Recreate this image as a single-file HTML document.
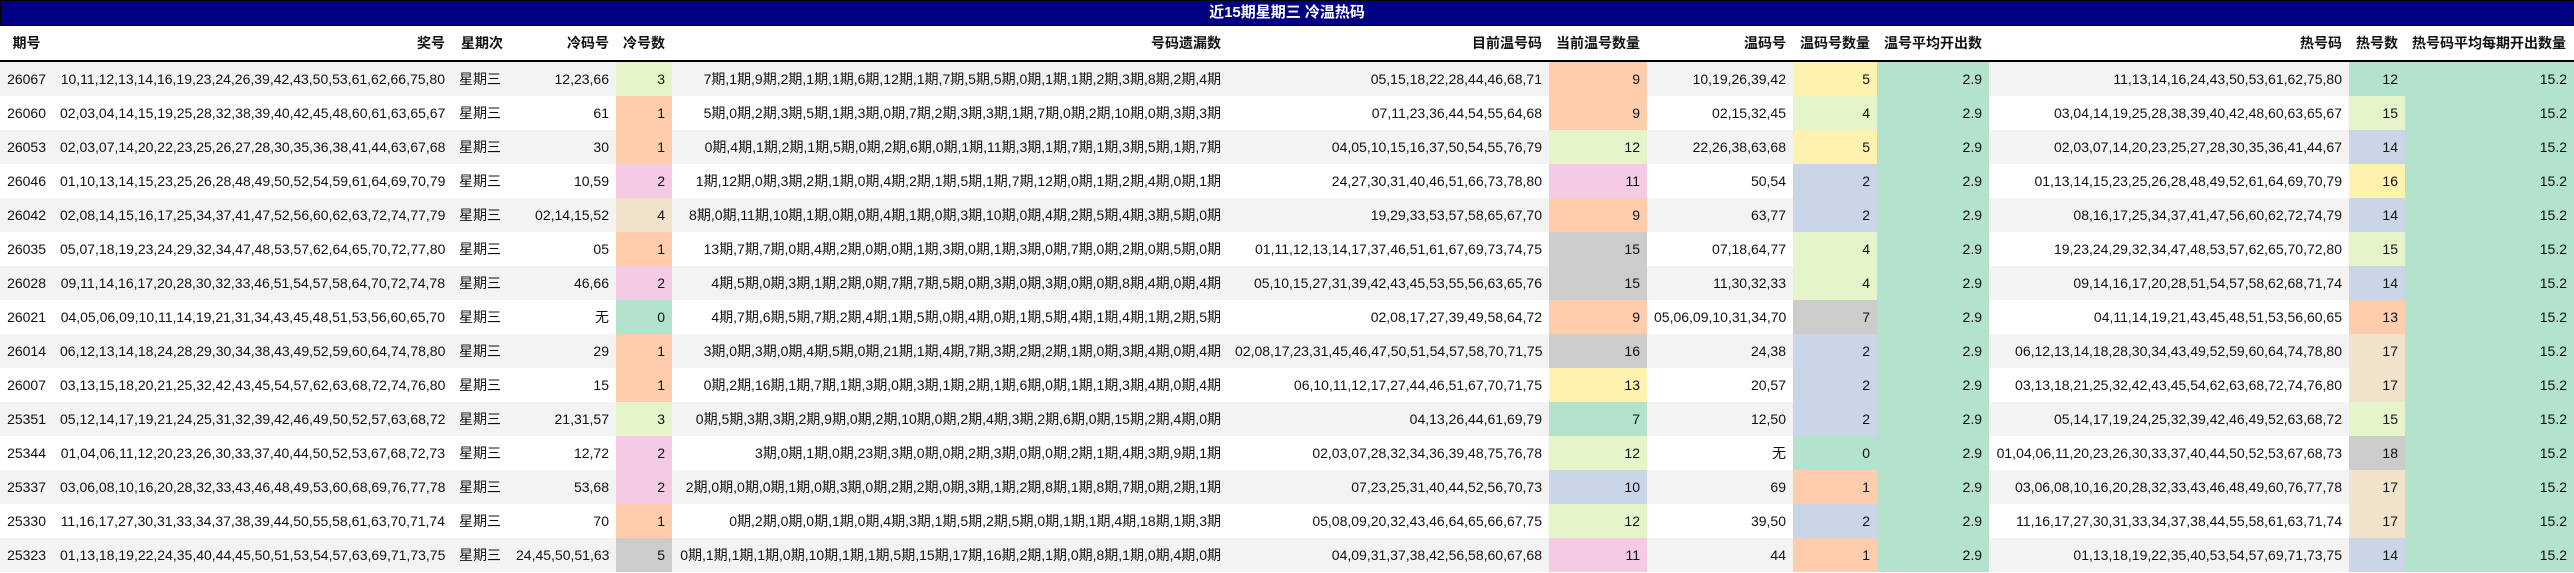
<!DOCTYPE html>
<html><head><meta charset="utf-8"><style>
body{margin:0;width:2574px;height:573px;overflow:hidden;background:#fff;font-family:"Liberation Sans","Noto Sans CJK SC",sans-serif;font-size:14px;color:#111}
.t{height:24px;background:#000080;border:1px solid #000;color:#fff;font-weight:bold;font-size:15px;text-align:center;line-height:24px}
table{border-collapse:collapse;table-layout:fixed;width:2574px}
td,th{padding:0 7px;white-space:nowrap;overflow:hidden;text-align:right}
th{height:34px;border-bottom:2px solid #000;font-weight:bold}
td{height:34px}
tr.o td{background:#f3f3f3}
.l{text-align:left}.c{text-align:center}
tr td.G{background:#e6f5c9}tr td.P{background:#fdcdac}tr td.K{background:#f4cae4}tr td.M{background:#b3e2cd}
tr td.Y{background:#fff2ae}tr td.B{background:#cbd5e8}tr td.E{background:#f1e2cc}tr td.S{background:#cccccc}
</style></head><body>
<div class="t">近15期星期三 冷温热码</div>
<table>
<colgroup><col style="width:53px"><col style="width:399px"><col style="width:57px"><col style="width:107px"><col style="width:56px"><col style="width:556px"><col style="width:321px"><col style="width:98px"><col style="width:146px"><col style="width:84px"><col style="width:112px"><col style="width:360px"><col style="width:56px"><col style="width:169px"></colgroup>
<tr><th class="c">期号</th><th>奖号</th><th class="l" style="padding-left:9px">星期次</th><th>冷码号</th><th class="l">冷号数</th><th>号码遗漏数</th><th>目前温号码</th><th class="l">当前温号数量</th><th>温码号</th><th class="l">温码号数量</th><th class="l">温号平均开出数</th><th>热号码</th><th class="l">热号数</th><th class="l">热号码平均每期开出数量</th></tr>
<tr class="o"><td>26067</td><td>10,11,12,13,14,16,19,23,24,26,39,42,43,50,53,61,62,66,75,80</td><td class="l">星期三</td><td>12,23,66</td><td class="G">3</td><td>7期,1期,9期,2期,1期,1期,6期,12期,1期,7期,5期,5期,0期,1期,1期,2期,3期,8期,2期,4期</td><td>05,15,18,22,28,44,46,68,71</td><td class="P">9</td><td>10,19,26,39,42</td><td class="Y">5</td><td class="M">2.9</td><td>11,13,14,16,24,43,50,53,61,62,75,80</td><td class="M">12</td><td class="M">15.2</td></tr>
<tr><td>26060</td><td>02,03,04,14,15,19,25,28,32,38,39,40,42,45,48,60,61,63,65,67</td><td class="l">星期三</td><td>61</td><td class="P">1</td><td>5期,0期,2期,3期,5期,1期,3期,0期,7期,2期,3期,3期,1期,7期,0期,2期,10期,0期,3期,3期</td><td>07,11,23,36,44,54,55,64,68</td><td class="P">9</td><td>02,15,32,45</td><td class="G">4</td><td class="M">2.9</td><td>03,04,14,19,25,28,38,39,40,42,48,60,63,65,67</td><td class="G">15</td><td class="M">15.2</td></tr>
<tr class="o"><td>26053</td><td>02,03,07,14,20,22,23,25,26,27,28,30,35,36,38,41,44,63,67,68</td><td class="l">星期三</td><td>30</td><td class="P">1</td><td>0期,4期,1期,2期,1期,5期,0期,2期,6期,0期,1期,11期,3期,1期,7期,1期,3期,5期,1期,7期</td><td>04,05,10,15,16,37,50,54,55,76,79</td><td class="G">12</td><td>22,26,38,63,68</td><td class="Y">5</td><td class="M">2.9</td><td>02,03,07,14,20,23,25,27,28,30,35,36,41,44,67</td><td class="B">14</td><td class="M">15.2</td></tr>
<tr><td>26046</td><td>01,10,13,14,15,23,25,26,28,48,49,50,52,54,59,61,64,69,70,79</td><td class="l">星期三</td><td>10,59</td><td class="K">2</td><td>1期,12期,0期,3期,2期,1期,0期,4期,2期,1期,5期,1期,7期,12期,0期,1期,2期,4期,0期,1期</td><td>24,27,30,31,40,46,51,66,73,78,80</td><td class="K">11</td><td>50,54</td><td class="B">2</td><td class="M">2.9</td><td>01,13,14,15,23,25,26,28,48,49,52,61,64,69,70,79</td><td class="Y">16</td><td class="M">15.2</td></tr>
<tr class="o"><td>26042</td><td>02,08,14,15,16,17,25,34,37,41,47,52,56,60,62,63,72,74,77,79</td><td class="l">星期三</td><td>02,14,15,52</td><td class="E">4</td><td>8期,0期,11期,10期,1期,0期,0期,4期,1期,0期,3期,10期,0期,4期,2期,5期,4期,3期,5期,0期</td><td>19,29,33,53,57,58,65,67,70</td><td class="P">9</td><td>63,77</td><td class="B">2</td><td class="M">2.9</td><td>08,16,17,25,34,37,41,47,56,60,62,72,74,79</td><td class="B">14</td><td class="M">15.2</td></tr>
<tr><td>26035</td><td>05,07,18,19,23,24,29,32,34,47,48,53,57,62,64,65,70,72,77,80</td><td class="l">星期三</td><td>05</td><td class="P">1</td><td>13期,7期,7期,0期,4期,2期,0期,0期,1期,3期,0期,1期,3期,0期,7期,0期,2期,0期,5期,0期</td><td>01,11,12,13,14,17,37,46,51,61,67,69,73,74,75</td><td class="S">15</td><td>07,18,64,77</td><td class="G">4</td><td class="M">2.9</td><td>19,23,24,29,32,34,47,48,53,57,62,65,70,72,80</td><td class="G">15</td><td class="M">15.2</td></tr>
<tr class="o"><td>26028</td><td>09,11,14,16,17,20,28,30,32,33,46,51,54,57,58,64,70,72,74,78</td><td class="l">星期三</td><td>46,66</td><td class="K">2</td><td>4期,5期,0期,3期,1期,2期,0期,7期,7期,5期,0期,3期,0期,3期,0期,0期,8期,4期,0期,4期</td><td>05,10,15,27,31,39,42,43,45,53,55,56,63,65,76</td><td class="S">15</td><td>11,30,32,33</td><td class="G">4</td><td class="M">2.9</td><td>09,14,16,17,20,28,51,54,57,58,62,68,71,74</td><td class="B">14</td><td class="M">15.2</td></tr>
<tr><td>26021</td><td>04,05,06,09,10,11,14,19,21,31,34,43,45,48,51,53,56,60,65,70</td><td class="l">星期三</td><td>无</td><td class="M">0</td><td>4期,7期,6期,5期,7期,2期,4期,1期,5期,0期,4期,0期,1期,5期,4期,1期,4期,1期,2期,5期</td><td>02,08,17,27,39,49,58,64,72</td><td class="P">9</td><td>05,06,09,10,31,34,70</td><td class="S">7</td><td class="M">2.9</td><td>04,11,14,19,21,43,45,48,51,53,56,60,65</td><td class="P">13</td><td class="M">15.2</td></tr>
<tr class="o"><td>26014</td><td>06,12,13,14,18,24,28,29,30,34,38,43,49,52,59,60,64,74,78,80</td><td class="l">星期三</td><td>29</td><td class="P">1</td><td>3期,0期,3期,0期,4期,5期,0期,21期,1期,4期,7期,3期,2期,2期,1期,0期,3期,4期,0期,4期</td><td>02,08,17,23,31,45,46,47,50,51,54,57,58,70,71,75</td><td class="S">16</td><td>24,38</td><td class="B">2</td><td class="M">2.9</td><td>06,12,13,14,18,28,30,34,43,49,52,59,60,64,74,78,80</td><td class="E">17</td><td class="M">15.2</td></tr>
<tr><td>26007</td><td>03,13,15,18,20,21,25,32,42,43,45,54,57,62,63,68,72,74,76,80</td><td class="l">星期三</td><td>15</td><td class="P">1</td><td>0期,2期,16期,1期,7期,1期,3期,0期,3期,1期,2期,1期,6期,0期,1期,1期,3期,4期,0期,4期</td><td>06,10,11,12,17,27,44,46,51,67,70,71,75</td><td class="Y">13</td><td>20,57</td><td class="B">2</td><td class="M">2.9</td><td>03,13,18,21,25,32,42,43,45,54,62,63,68,72,74,76,80</td><td class="E">17</td><td class="M">15.2</td></tr>
<tr class="o"><td>25351</td><td>05,12,14,17,19,21,24,25,31,32,39,42,46,49,50,52,57,63,68,72</td><td class="l">星期三</td><td>21,31,57</td><td class="G">3</td><td>0期,5期,3期,3期,2期,9期,0期,2期,10期,0期,2期,4期,3期,2期,6期,0期,15期,2期,4期,0期</td><td>04,13,26,44,61,69,79</td><td class="M">7</td><td>12,50</td><td class="B">2</td><td class="M">2.9</td><td>05,14,17,19,24,25,32,39,42,46,49,52,63,68,72</td><td class="G">15</td><td class="M">15.2</td></tr>
<tr><td>25344</td><td>01,04,06,11,12,20,23,26,30,33,37,40,44,50,52,53,67,68,72,73</td><td class="l">星期三</td><td>12,72</td><td class="K">2</td><td>3期,0期,1期,0期,23期,3期,0期,0期,2期,3期,0期,0期,2期,1期,4期,3期,9期,1期</td><td>02,03,07,28,32,34,36,39,48,75,76,78</td><td class="G">12</td><td>无</td><td class="M">0</td><td class="M">2.9</td><td>01,04,06,11,20,23,26,30,33,37,40,44,50,52,53,67,68,73</td><td class="S">18</td><td class="M">15.2</td></tr>
<tr class="o"><td>25337</td><td>03,06,08,10,16,20,28,32,33,43,46,48,49,53,60,68,69,76,77,78</td><td class="l">星期三</td><td>53,68</td><td class="K">2</td><td>2期,0期,0期,0期,1期,0期,3期,0期,2期,2期,0期,3期,1期,2期,8期,1期,8期,7期,0期,2期,1期</td><td>07,23,25,31,40,44,52,56,70,73</td><td class="B">10</td><td>69</td><td class="P">1</td><td class="M">2.9</td><td>03,06,08,10,16,20,28,32,33,43,46,48,49,60,76,77,78</td><td class="E">17</td><td class="M">15.2</td></tr>
<tr><td>25330</td><td>11,16,17,27,30,31,33,34,37,38,39,44,50,55,58,61,63,70,71,74</td><td class="l">星期三</td><td>70</td><td class="P">1</td><td>0期,2期,0期,0期,1期,0期,4期,3期,1期,5期,2期,5期,0期,1期,1期,4期,18期,1期,3期</td><td>05,08,09,20,32,43,46,64,65,66,67,75</td><td class="G">12</td><td>39,50</td><td class="B">2</td><td class="M">2.9</td><td>11,16,17,27,30,31,33,34,37,38,44,55,58,61,63,71,74</td><td class="E">17</td><td class="M">15.2</td></tr>
<tr class="o"><td>25323</td><td>01,13,18,19,22,24,35,40,44,45,50,51,53,54,57,63,69,71,73,75</td><td class="l">星期三</td><td>24,45,50,51,63</td><td class="S">5</td><td>0期,1期,1期,1期,0期,10期,1期,1期,5期,15期,17期,16期,2期,1期,0期,8期,1期,0期,4期,0期</td><td>04,09,31,37,38,42,56,58,60,67,68</td><td class="K">11</td><td>44</td><td class="P">1</td><td class="M">2.9</td><td>01,13,18,19,22,35,40,53,54,57,69,71,73,75</td><td class="B">14</td><td class="M">15.2</td></tr>
</table>
</body></html>
